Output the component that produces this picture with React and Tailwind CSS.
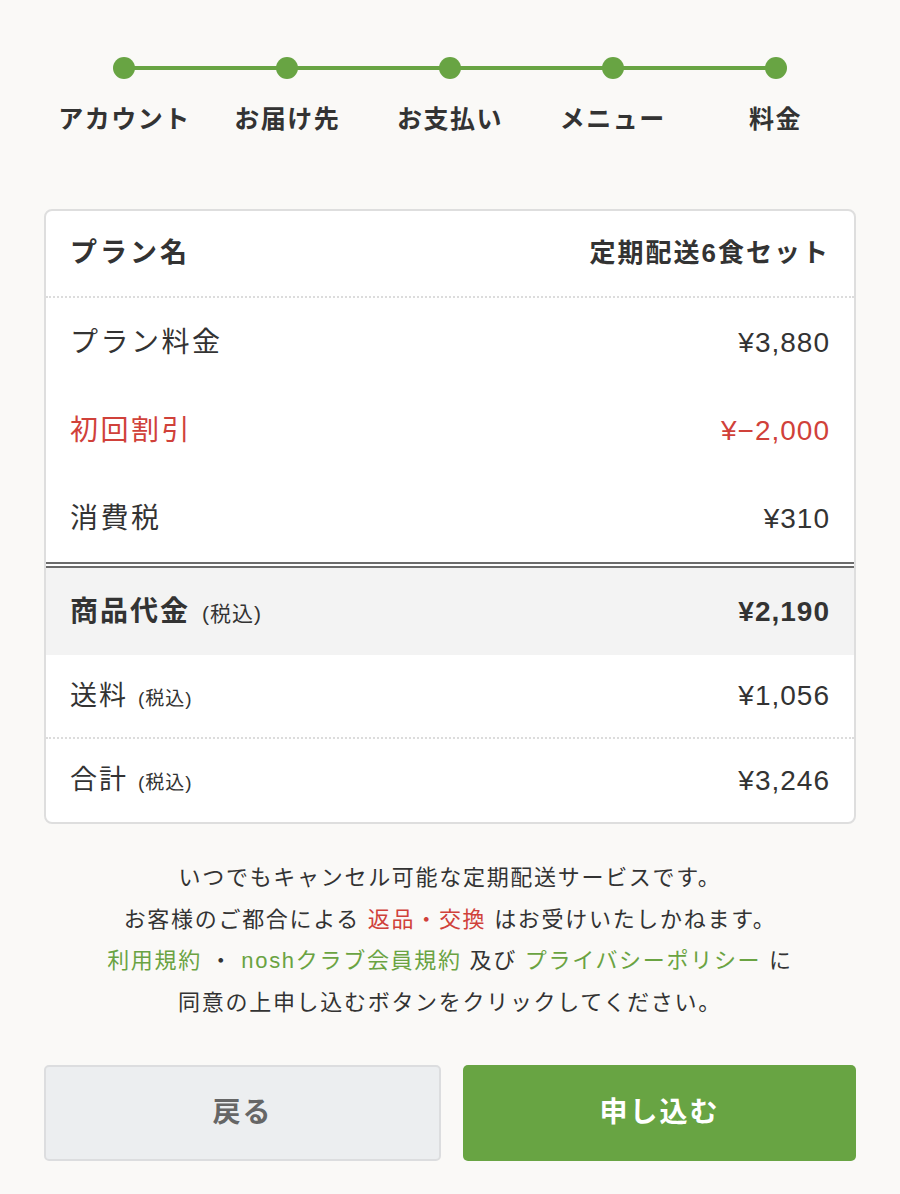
import React from "react";

const steps = ["アカウント", "お届け先", "お支払い", "メニュー", "料金"];

function Row({ label, value, className = "", labelClass = "", valueClass = "" }) {
  return (
    <div className={`flex items-center justify-between px-[24px] ${className}`}>
      <div className={labelClass}>{label}</div>
      <div className={valueClass}>{value}</div>
    </div>
  );
}

export default function App() {
  return (
    <div
      className="min-h-[1194px] w-full bg-[#faf9f7] text-[#333333]"
      style={{ fontFamily: '"Liberation Sans", "Noto Sans CJK JP", sans-serif' }}
    >
      {/* Stepper */}
      <div className="px-[43px] pt-[57px]">
        <div className="relative grid grid-cols-5">
          <div className="absolute left-[10%] right-[10%] top-[9px] h-[4px] bg-[#68a443]" />
          {steps.map((s) => (
            <div key={s} className="relative flex flex-col items-center">
              <div className="h-[22px] w-[22px] rounded-full bg-[#68a443]" />
              <div className="mt-[24px] text-[25px] font-bold leading-[32px] tracking-[1.5px] text-[#333]">{s}</div>
            </div>
          ))}
        </div>
      </div>

      {/* Card */}
      <div className="mx-[44px] mt-[74px] overflow-hidden rounded-[8px] border-2 border-[#dedede] bg-white">
        <Row
          label="プラン名"
          value="定期配送6食セット"
          className="h-[87px] border-b-2 border-dotted border-[#dcdcdc]"
          labelClass="text-[27px] font-bold tracking-[3px]"
          valueClass="text-[26px] font-bold tracking-[2px]"
        />
        <Row
          label="プラン料金"
          value="¥3,880"
          className="h-[89px]"
          labelClass="text-[28px] tracking-[2.5px]"
          valueClass="text-[28px] tracking-[1px]"
        />
        <Row
          label="初回割引"
          value="¥−2,000"
          className="h-[88px] text-[#d0413a]"
          labelClass="text-[28px] tracking-[2.5px]"
          valueClass="text-[28px] tracking-[1px]"
        />
        <Row
          label="消費税"
          value="¥310"
          className="h-[87px]"
          labelClass="text-[28px] tracking-[2.5px]"
          valueClass="text-[28px] tracking-[1px]"
        />
        <div className="h-[6px] border-y-2 border-[#6b6b6b] bg-white" />
        <Row
          label={
            <span>
              <span className="tracking-[2px]">商品代金</span>
              <span className="ml-[12px] text-[21px] font-normal tracking-[1px]">(税込)</span>
            </span>
          }
          value="¥2,190"
          className="h-[87px] bg-[#f3f3f3]"
          labelClass="text-[28px] font-bold"
          valueClass="text-[28px] font-bold tracking-[1px]"
        />
        <Row
          label={
            <span>
              <span className="tracking-[2px]">送料</span>
              <span className="ml-[10px] text-[19px] tracking-[1px]">(税込)</span>
            </span>
          }
          value="¥1,056"
          className="h-[84px] border-b-2 border-dotted border-[#dcdcdc]"
          labelClass="text-[27px]"
          valueClass="text-[28px] tracking-[1px]"
        />
        <Row
          label={
            <span>
              <span className="tracking-[2px]">合計</span>
              <span className="ml-[10px] text-[19px] tracking-[1px]">(税込)</span>
            </span>
          }
          value="¥3,246"
          className="h-[83px]"
          labelClass="text-[27px]"
          valueClass="text-[28px] tracking-[1px]"
        />
      </div>

      {/* Notes */}
      <div className="mt-[33px] text-center text-[22px] leading-[41.5px] tracking-[1.7px] text-[#333]">
        <p>いつでもキャンセル可能な定期配送サービスです。</p>
        <p>
          お客様のご都合による <span className="text-[#d0413a]">返品・交換</span> はお受けいたしかねます。
        </p>
        <p>
          <span className="text-[#6aa342]">利用規約</span>
          {" ・ "}
          <span className="text-[#6aa342]">noshクラブ会員規約</span> 及び{" "}
          <span className="text-[#6aa342]">プライバシーポリシー</span> に
        </p>
        <p>同意の上申し込むボタンをクリックしてください。</p>
      </div>

      {/* Buttons */}
      <div className="mx-[44px] mt-[42px] flex gap-[22px] pb-[34px]">
        <button className="flex h-[96px] flex-1 items-center justify-center rounded-[5px] border-2 border-[#dcdddf] bg-[#eceef0] text-[28px] font-bold tracking-[2px] text-[#666]">
          戻る
        </button>
        <button className="flex h-[96px] flex-1 items-center justify-center rounded-[5px] bg-[#68a443] text-[28px] font-bold tracking-[2px] text-white">
          申し込む
        </button>
      </div>
    </div>
  );
}
